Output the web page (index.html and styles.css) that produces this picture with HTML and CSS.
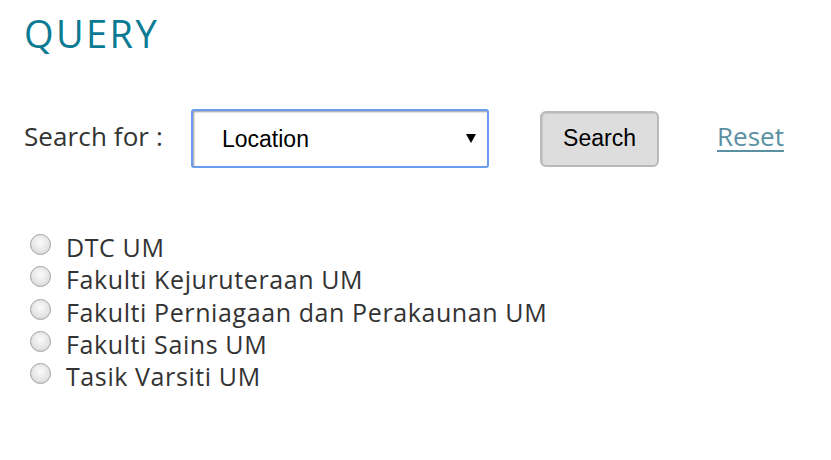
FILE: index.html
```html
<!DOCTYPE html>
<html>
<head>
<meta charset="utf-8">
<link rel="stylesheet" href="styles.css">
</head>
<body>
<div class="page">
  <h1 class="title">QUERY</h1>
  <form class="query-form">
    <label class="label">Search for :</label>
    <div class="select-wrap">
      <select class="select">
        <option>Location</option>
      </select>
    </div>
    <button type="button" class="btn">Search</button>
    <a href="#" class="reset">Reset</a>
  </form>
  <div class="options">
    <label class="opt"><input type="radio" name="loc" class="radio">DTC UM</label>
    <label class="opt"><input type="radio" name="loc" class="radio">Fakulti Kejuruteraan UM</label>
    <label class="opt"><input type="radio" name="loc" class="radio">Fakulti Perniagaan dan Perakaunan UM</label>
    <label class="opt"><input type="radio" name="loc" class="radio">Fakulti Sains UM</label>
    <label class="opt"><input type="radio" name="loc" class="radio">Tasik Varsiti UM</label>
  </div>
</div>
</body>
</html>
```
FILE: styles.css
```css
html, body {
  margin: 0;
  padding: 0;
  background: #fff;
}
.page {
  padding: 8px 24px;
  font-family: "Open Sans", sans-serif;
  color: #333;
}
.title {
  margin: 0;
  font-family: "Open Sans", sans-serif;
  font-weight: 400;
  font-size: 38px;
  letter-spacing: 2.4px;
  line-height: 50px;
  color: #0b7a93;
}
.query-form {
  display: flex;
  align-items: center;
  margin-top: 51px;
  height: 59px;
}
.label {
  font-size: 26px;
  letter-spacing: 0.1px;
  width: 167px;
  margin-top: -6px;
  color: #333;
}
.select-wrap {
  position: relative;
  width: 298px;
  height: 59px;
}
.select {
  appearance: none;
  -webkit-appearance: none;
  width: 100%;
  height: 100%;
  box-sizing: border-box;
  border: 2px solid #6b9cf0;
  border-radius: 3px;
  box-shadow: inset 1px 1px 2px #9a9a9a;
  background: #fff;
  font-family: "Liberation Sans", Arial, sans-serif;
  font-size: 23px;
  color: #000;
  padding: 0 0 0 29px;
  outline: none;
}
.select-wrap::after {
  content: "";
  position: absolute;
  right: 13px;
  top: 25px;
  width: 0;
  height: 0;
  border-left: 5px solid transparent;
  border-right: 5px solid transparent;
  border-top: 9px solid #000;
  pointer-events: none;
}
.btn {
  margin-left: 51px;
  width: 119px;
  height: 56px;
  box-sizing: border-box;
  background: #dddddd;
  border: 2px solid #b9b9b9;
  border-radius: 6px;
  box-shadow: inset 1px 1px 1px #c8c8c8;
  font-family: "Liberation Sans", Arial, sans-serif;
  font-size: 23px;
  color: #000;
  padding: 0;
}
.reset {
  margin-left: 58px;
  font-size: 26px;
  color: #5b90a3;
  text-decoration: underline;
  text-decoration-thickness: 2px;
  text-underline-offset: 4px;
  margin-top: -6px;
}
.options {
  display: flex;
  flex-direction: column;
  margin-top: 63px;
}
.opt {
  display: block;
  font-size: 25px;
  letter-spacing: 0.6px;
  line-height: 32.25px;
  height: 32.25px;
  color: #333;
}
.radio {
  appearance: none;
  -webkit-appearance: none;
  display: inline-block;
  vertical-align: baseline;
  width: 21px;
  height: 21px;
  margin: 0 15px 2px 6px;
  border-radius: 50%;
  border: 1px solid #a0a0a0;
  background: radial-gradient(circle at 50% 40%, #fbfbfb 0%, #e8e8e8 50%, #cfcfcf 100%);
  box-sizing: border-box;
}
```
